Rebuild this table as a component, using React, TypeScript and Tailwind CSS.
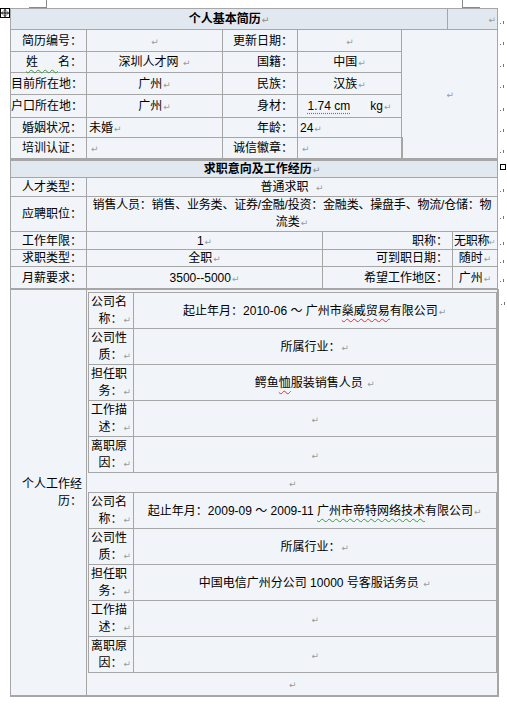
import React from "react";

// Word-style resume table (个人简历), rendered as nested html tables
const cell = "border border-[#a6a6a6] bg-[#f1f5f9] p-0 align-middle";
const head = "border border-[#a6a6a6] bg-[#e2e8f0] p-0 align-middle";
const label = `${cell} text-right pr-[4px] whitespace-nowrap`;

function P() {
  return <span className="font-['DejaVu_Sans'] text-[9px] leading-[12px] text-[#9a9a9a] ml-[1px]">↵</span>;
}

function Mark({ box }: { box?: boolean }) {
  return (
    <td className="p-0 pl-[2px] align-middle w-[8px]">
      {box ? (
        <div className="w-[6px] h-[6px] border border-black -mt-[4px]" />
      ) : (
        <svg width="6" height="8" viewBox="0 0 6 8" className="mt-[3px]">
          <rect x="0" y="6" width="1" height="1" fill="#777" />
          <rect x="3" y="4" width="1" height="3" fill="#777" />
        </svg>
      )}
    </td>
  );
}

function Handle() {
  return (
    <div className="w-[10px] h-[10px] border border-black bg-white flex items-center justify-center">
      <svg width="8" height="8" viewBox="0 0 8 8">
        <path d="M4 0.5V7.5M0.5 4H7.5" stroke="#000" strokeWidth="1" />
        <path d="M2.5 1.8L4 0.5L5.5 1.8M2.5 6.2L4 7.5L5.5 6.2M1.8 2.5L0.5 4L1.8 5.5M6.2 2.5L7.5 4L6.2 5.5" stroke="#000" strokeWidth="0.8" fill="none" />
      </svg>
    </div>
  );
}

function InnerLabel({ a, b }: { a: string; b: string }) {
  return (
    <td className={`${cell} pl-[2px] pr-[2px] leading-[17px]`}>
      <div className="whitespace-nowrap">{a}</div>
      <div className="text-right whitespace-nowrap">{b}<P /></div>
    </td>
  );
}

function Job({ rows }: { rows: { a: string; b: string; v: React.ReactNode }[] }) {
  return (
    <table className="table-fixed border-collapse w-full">
      <colgroup>
        <col className="w-[45px]" />
        <col />
      </colgroup>
      <tbody>
        {rows.map((r, i) => (
          <tr key={i} className="h-[36px]">
            <InnerLabel a={r.a} b={r.b} />
            <td className={`${cell} text-center whitespace-nowrap`}>{r.v}</td>
          </tr>
        ))}
      </tbody>
    </table>
  );
}

export default function App() {
  const wavyRed = "underline decoration-wavy decoration-[#e03030] decoration-1 underline-offset-[3px]";
  const wavyGreen = "underline decoration-wavy decoration-[#3c9a3c] decoration-1 underline-offset-[3px]";

  return (
    <div className="w-[507px] h-[705px] overflow-hidden bg-white text-black text-[12px] leading-[16px] font-['Liberation_Sans','Noto_Sans_CJK_SC',sans-serif]">
      <div className="flex h-[8px]">
        <div className="ml-[29px] w-[18px] h-[8px] border-r border-b border-[#8a8a8a]" />
        <div className="ml-[415px] w-[18px] h-[8px] border-l border-b border-[#8a8a8a]" />
      </div>
      <div className="flex items-start">
        <Handle />
        <div className="flex flex-col">
          {/* 个人基本简历 */}
          <table className="table-fixed border-collapse w-[495px]">
            <colgroup>
              <col className="w-[76px]" />
              <col className="w-[136px]" />
              <col className="w-[75px]" />
              <col className="w-[104px]" />
              <col className="w-[46px]" />
              <col className="w-[50px]" />
              <col className="w-[8px]" />
            </colgroup>
            <tbody>
              <tr className="h-[21px]">
                <td colSpan={5} className={`${head} text-center font-bold`}>个人基本简历<P /></td>
                <td className={`${head} text-right pr-[1px]`}><P /></td>
                <Mark />
              </tr>
              <tr className="h-[22px]">
                <td className={label}>简历编号：</td>
                <td className={`${cell} text-center`}><P /></td>
                <td className={label}>更新日期：</td>
                <td className={`${cell} text-center`}><P /></td>
                <td rowSpan={6} colSpan={2} className={`${cell} text-center`}><P /></td>
                <Mark />
              </tr>
              <tr className="h-[21px]">
                <td className={`${label} whitespace-pre`}><span className={wavyGreen}>{"姓      "}</span>名：</td>
                <td className={`${cell} text-center`}>深圳人才网 <P /></td>
                <td className={label}>国籍：</td>
                <td className={`${cell} text-center`}>中国<P /></td>
                <Mark />
              </tr>
              <tr className="h-[22px]">
                <td className={label}>目前所在地：</td>
                <td className={`${cell} text-center`}>广州<P /></td>
                <td className={label}>民族：</td>
                <td className={`${cell} text-center`}>汉族<P /></td>
                <Mark />
              </tr>
              <tr className="h-[23px]">
                <td className={label}>户口所在地：</td>
                <td className={`${cell} text-center`}>广州<P /></td>
                <td className={label}>身材：</td>
                <td className={`${cell} text-center whitespace-pre`}>
                  <span className="underline decoration-dotted decoration-[#c040c0] underline-offset-[3px]">1.74 cm</span>{"      "}kg<P />
                </td>
                <Mark />
              </tr>
              <tr className="h-[20px]">
                <td className={label}>婚姻状况：</td>
                <td className={`${cell} pl-[2px]`}>未婚<P /></td>
                <td className={label}>年龄：</td>
                <td className={`${cell} pl-[2px]`}>24<P /></td>
                <Mark />
              </tr>
              <tr className="h-[21px]">
                <td className={label}>培训认证：</td>
                <td className={`${cell} pl-[3px]`}><P /></td>
                <td className={label}>诚信徽章：</td>
                <td className={`${cell} border-r-2 pl-[3px]`}><P /></td>
                <Mark />
              </tr>
            </tbody>
          </table>

          {/* 求职意向及工作经历 */}
          <table className="table-fixed border-collapse w-[495px]">
            <colgroup>
              <col className="w-[76px]" />
              <col className="w-[236px]" />
              <col className="w-[130px]" />
              <col className="w-[45px]" />
              <col className="w-[8px]" />
            </colgroup>
            <tbody>
              <tr className="h-[17px]">
                <td colSpan={4} className={`${head} border-t-2 text-center font-bold pl-[16px]`}>求职意向及工作经历<P /></td>
                <Mark box />
              </tr>
              <tr className="h-[19px]">
                <td className={label}>人才类型：</td>
                <td colSpan={3} className={`${cell} text-center whitespace-pre`}>{"普通求职  "}<P /></td>
                <Mark />
              </tr>
              <tr className="h-[35px]">
                <td className={label}>应聘职位：</td>
                <td colSpan={3} className={`${cell} text-center leading-[17px]`}>
                  <div className="whitespace-nowrap tracking-[-0.2px]">销售人员：销售、业务类、证券/金融/投资：金融类、操盘手、物流/仓储：物</div>
                  <div>流类<P /></div>
                </td>
                <Mark />
              </tr>
              <tr className="h-[18px]">
                <td className={label}>工作年限：</td>
                <td className={`${cell} text-center`}>1<P /></td>
                <td className={label}>职称：</td>
                <td className={`${cell} pl-[1px] whitespace-nowrap tracking-[-0.3px]`}>无职称<span className="font-['DejaVu_Sans'] text-[8px] leading-[12px] text-[#9a9a9a]">↵</span></td>
                <Mark />
              </tr>
              <tr className="h-[17px]">
                <td className={label}>求职类型：</td>
                <td className={`${cell} text-center`}>全职<P /></td>
                <td className={label}>可到职日期：</td>
                <td className={`${cell} text-center whitespace-nowrap`}>随时<P /></td>
                <Mark />
              </tr>
              <tr className="h-[22px]">
                <td className={label}>月薪要求：</td>
                <td className={`${cell} text-center`}>3500--5000<P /></td>
                <td className={label}>希望工作地区：</td>
                <td className={`${cell} text-center whitespace-nowrap`}>广州<P /></td>
                <Mark />
              </tr>
            </tbody>
          </table>

          {/* 个人工作经历 */}
          <table className="table-fixed border-collapse w-[495px]">
            <colgroup>
              <col className="w-[76px]" />
              <col className="w-[411px]" />
              <col className="w-[8px]" />
            </colgroup>
            <tbody>
              <tr>
                <td className={`${cell} border-b-2 text-right pr-[4px] pl-[8px] leading-[17px]`}>个人工作经历：</td>
                <td className={`${cell} border-b-2 border-r-2 pt-[2px] pl-[1px]`}>
                  <Job
                    rows={[
                      { a: "公司名", b: "称：", v: <>起止年月：2010-06 ～ 广州市<span className={wavyRed}>燊威贸易</span>有限公司<P /></> },
                      { a: "公司性", b: "质：", v: <>所属行业：<P /></> },
                      { a: "担任职", b: "务：", v: <>鳄鱼<span className={wavyRed}>恤</span>服装销售人员 <P /></> },
                      { a: "工作描", b: "述：", v: <P /> },
                      { a: "离职原", b: "因：", v: <P /> },
                    ]}
                  />
                  <div className="h-[19px] text-center pt-[2px]"><P /></div>
                  <Job
                    rows={[
                      { a: "公司名", b: "称：", v: <>起止年月：2009-09 ～ 2009-11 <span className={wavyGreen}>广州市帝特网络技术</span>有限公司<P /></> },
                      { a: "公司性", b: "质：", v: <>所属行业：<P /></> },
                      { a: "担任职", b: "务：", v: <>中国电信广州分公司 10000 号客服话务员 <P /></> },
                      { a: "工作描", b: "述：", v: <P /> },
                      { a: "离职原", b: "因：", v: <P /> },
                    ]}
                  />
                  <div className="h-[22px] text-center pt-[3px]"><P /></div>
                </td>
                <td className="p-0 pl-[2px] align-top">
                  <svg width="6" height="8" viewBox="0 0 6 8" className="mt-[8px]">
                    <rect x="0" y="6" width="1" height="1" fill="#777" />
                    <rect x="3" y="4" width="1" height="3" fill="#777" />
                  </svg>
                </td>
              </tr>
            </tbody>
          </table>
        </div>
      </div>
    </div>
  );
}
